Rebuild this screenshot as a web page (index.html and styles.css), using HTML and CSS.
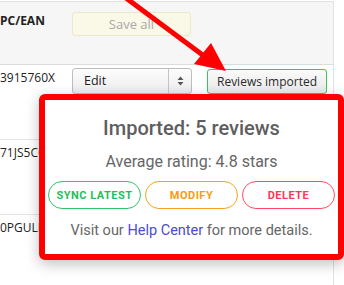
FILE: index.html
```html
<!DOCTYPE html>
<html lang="en">
<head>
    <meta charset="UTF-8">
    <meta name="viewport" content="width=device-width, initial-scale=1.0">
    <title>Reviews import</title>
    <link rel="stylesheet" href="styles.css">
</head>
<body>
    <div class="sheet">
        <div class="row head">
            <div class="cell code">PC/EAN</div>
            <div class="cell"><button class="save-btn">Save all</button></div>
            <div class="cell"></div>
        </div>
        <div class="row">
            <div class="cell code-val">3915760X</div>
            <div class="cell">
                <div class="select">
                    <span class="select-label">Edit</span>
                    <span class="select-arrows">
                        <svg width="7" height="10" viewBox="0 0 7 10">
                            <polygon points="3.5,0.5 6.5,4 0.5,4" fill="#555"/>
                            <polygon points="3.5,9.5 6.5,6 0.5,6" fill="#555"/>
                        </svg>
                    </span>
                </div>
            </div>
            <div class="cell"><button class="reviews-btn">Reviews imported</button></div>
        </div>
        <div class="row">
            <div class="cell code-val">71JS5CQK</div>
            <div class="cell"></div>
            <div class="cell"></div>
        </div>
        <div class="row">
            <div class="cell code-val">0PGULIT2</div>
            <div class="cell"></div>
            <div class="cell"></div>
        </div>
    </div>

    <svg class="arrow" width="344" height="285" viewBox="0 0 344 285">
        <line x1="126" y1="-2" x2="204" y2="56" stroke="#ff0000" stroke-width="5"/>
        <polygon points="226,71 194,64 211,43" fill="#ff0000"/>
    </svg>

    <div class="popup">
        <h2 class="popup-title">Imported: 5 reviews</h2>
        <p class="popup-rating">Average rating: 4.8 stars</p>
        <div class="popup-actions">
            <button class="pill pill-green">Sync latest</button>
            <button class="pill pill-orange">Modify</button>
            <button class="pill pill-red">Delete</button>
        </div>
        <p class="popup-note">Visit our <a href="#">Help Center</a> for more details.</p>
    </div>
</body>
</html>
```

FILE: styles.css
```css
* {
    margin: 0;
    padding: 0;
    box-sizing: border-box;
}

body {
    background: #ffffff;
    font-family: "Open Sans", "DejaVu Sans", sans-serif;
    font-size: 12px;
    color: #222;
    overflow: hidden;
}

.sheet {
    width: 334px;
    margin-top: 1px;
    border-top: 1px solid #e2e2e2;
    border-right: 1px solid #e2e2e2;
}

.row {
    display: grid;
    grid-template-columns: 72px 135px 1fr;
    height: 75px;
    border-bottom: 1px solid #e4e4e4;
}

.row.head {
    height: 63px;
    background: #f6f6f6;
    border-bottom-color: #dcdcdc;
}

.cell {
    padding-top: 3px;
}

.head .cell {
    padding-top: 10px;
}

.code {
    font-weight: 700;
    font-size: 12px;
    padding-top: 9px;
}

.code-val {
    padding-top: 4px;
    overflow: hidden;
    white-space: nowrap;
}

.save-btn {
    width: 119px;
    height: 24px;
    background: #faf8e6;
    border: 1px solid #ece8c9;
    border-radius: 3px;
    font-family: inherit;
    font-size: 13px;
    color: #a9a9a9;
}

.select {
    display: flex;
    width: 120px;
    height: 26px;
    border: 1px solid #bdbdbd;
    border-radius: 3px;
    background: linear-gradient(#fdfdfd, #ececec);
}

.select-label {
    flex: 1;
    padding-left: 11px;
    line-height: 24px;
    font-size: 12.5px;
    border-right: 1px solid #c4c4c4;
}

.select-arrows {
    width: 22px;
    display: flex;
    align-items: center;
    justify-content: center;
}

.reviews-btn {
    width: 120px;
    height: 25px;
    margin-top: 1px;
    border: 1px solid #3fc45a;
    border-radius: 3px;
    background: linear-gradient(#fafafa, #e9e9e9);
    font-family: inherit;
    font-size: 12px;
    color: #2a2a2a;
}

.arrow {
    position: absolute;
    top: 0;
    left: 0;
    pointer-events: none;
}

.popup {
    position: absolute;
    left: 39px;
    top: 94px;
    width: 305px;
    height: 166px;
    background: #fff;
    border: 6px solid #ff0000;
    border-radius: 6px;
    box-shadow: 0 4px 14px rgba(0, 0, 0, 0.25);
    padding: 16px 3px 0;
    font-family: Roboto, "Noto Sans", sans-serif;
    text-align: center;
    color: #666;
}

.popup-title {
    font-size: 20px;
    font-weight: 500;
    color: #5e5e5e;
    line-height: 24px;
}

.popup-rating {
    font-size: 16px;
    line-height: 20px;
    margin-top: 12px;
}

.popup-actions {
    display: flex;
    gap: 4px;
    margin-top: 9px;
}

.pill {
    flex: 1;
    height: 28px;
    border-radius: 14px;
    background: #fff;
    font-family: Roboto, sans-serif;
    font-size: 11px;
    font-weight: 700;
    letter-spacing: 0.5px;
    text-transform: uppercase;
}

.pill-green {
    border: 1px solid #2dc565;
    color: #1fbf5c;
}

.pill-orange {
    border: 1px solid #f7a21b;
    color: #f59c0e;
}

.pill-red {
    border: 1px solid #ff4a63;
    color: #fb3a55;
}

.popup-note {
    font-size: 14.5px;
    line-height: 20px;
    margin-top: 12px;
}

.popup-note a {
    color: #4b4bd6;
    text-decoration: none;
}
```
